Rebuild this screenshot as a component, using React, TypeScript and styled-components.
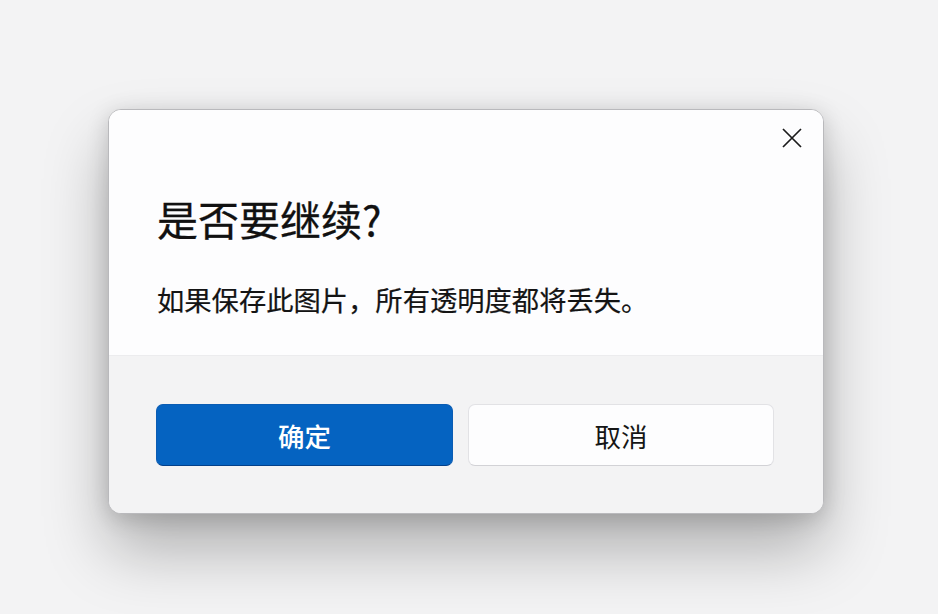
import React from "react";
import styled, { createGlobalStyle } from "styled-components";

const Global = createGlobalStyle`
  html, body { margin: 0; padding: 0; background: #f3f3f4; }
  body { font-family: "Noto Sans CJK SC", "Noto Sans", sans-serif; }
`;

const Page = styled.div`
  width: 938px;
  height: 614px;
  box-sizing: border-box;
  padding: 109px 0 0 108px;
  background: #f3f3f4;
  overflow: hidden;
`;

const Dialog = styled.div`
  width: 716px;
  height: 405px;
  box-sizing: border-box;
  border: 1px solid #b9b9bc;
  border-radius: 13px;
  overflow: hidden;
  display: flex;
  flex-direction: column;
  background: #fdfdfe;
  box-shadow: 0 36px 64px rgba(0, 0, 0, 0.28), 0 4px 22px rgba(0, 0, 0, 0.16);
`;

const Content = styled.div`
  height: 245px;
  box-sizing: border-box;
  padding: 8px 11px 0 48px;
  background: #fdfdfe;
  display: flex;
  flex-direction: column;
`;

const CloseRow = styled.div`
  display: flex;
  justify-content: flex-end;
`;

const CloseButton = styled.button`
  width: 40px;
  height: 40px;
  border: none;
  background: transparent;
  padding: 0;
  display: flex;
  align-items: center;
  justify-content: center;
  color: #1b1b1b;
`;

const Title = styled.h1`
  margin: 35px 0 0;
  font-size: 41px;
  line-height: 50px;
  font-weight: 400;
  color: #111111;
  -webkit-text-stroke: 0.3px #111111;
`;

const Message = styled.p`
  margin: 38px 0 0;
  font-size: 27.3px;
  line-height: 36px;
  font-weight: 400;
  color: #141414;
  -webkit-text-stroke: 0.2px #141414;
`;

const Footer = styled.div`
  flex: 1;
  box-sizing: border-box;
  padding: 48px 49px 0 47px;
  background: #f3f3f4;
  border-top: 1px solid #ececee;
  display: grid;
  grid-template-columns: 297px 306px;
  column-gap: 15px;
  align-content: start;
`;

const Button = styled.button<{ $primary?: boolean }>`
  height: 62px;
  border-radius: 7px;
  font-family: "Noto Sans CJK SC", "Noto Sans", sans-serif;
  font-size: 26.5px;
  font-weight: ${(p) => (p.$primary ? 500 : 400)};
  color: ${(p) => (p.$primary ? "#ffffff" : "#161616")};
  background: ${(p) => (p.$primary ? "#0563c1" : "#fdfdfe")};
  border: 1px solid ${(p) => (p.$primary ? "#0a5cb3" : "#e2e2e5")};
  border-bottom-color: ${(p) => (p.$primary ? "#03408a" : "#d2d2d6")};
  padding: 0;
  cursor: pointer;
`;

export default function App() {
  return (
    <>
      <Global />
      <Page>
        <Dialog>
          <Content>
            <CloseRow>
              <CloseButton aria-label="关闭">
                <svg width="22" height="22" viewBox="0 0 22 22">
                  <path d="M2 2 L20 20 M20 2 L2 20" stroke="#1b1b1b" strokeWidth="1.7" fill="none" />
                </svg>
              </CloseButton>
            </CloseRow>
            <Title>是否要继续?</Title>
            <Message>如果保存此图片，所有透明度都将丢失。</Message>
          </Content>
          <Footer>
            <Button $primary>确定</Button>
            <Button>取消</Button>
          </Footer>
        </Dialog>
      </Page>
    </>
  );
}
